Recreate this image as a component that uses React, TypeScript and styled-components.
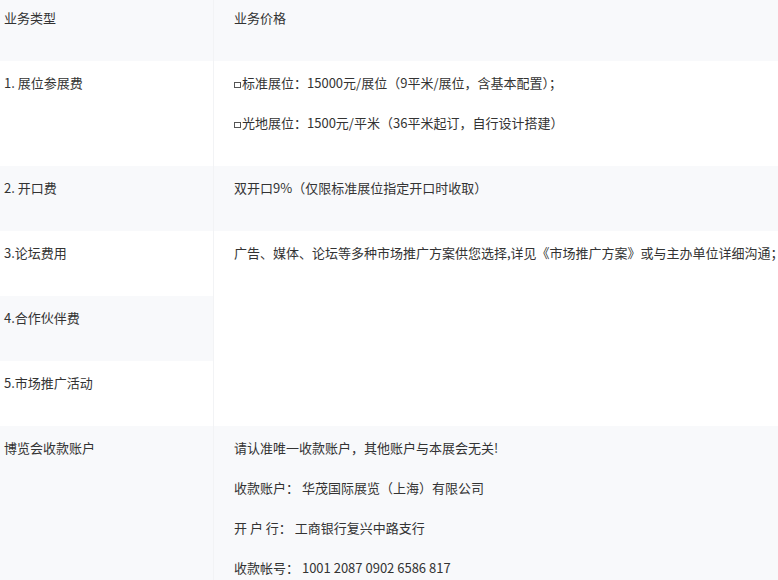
import React from "react";
import styled, { createGlobalStyle } from "styled-components";

const Global = createGlobalStyle`
  html, body { margin: 0; padding: 0; background: #ffffff; }
  body {
    overflow: hidden;
    font-family: "Noto Sans CJK SC", "Noto Sans", sans-serif;
    font-size: 13px;
    color: #333333;
  }
`;

const Viewport = styled.div`
  width: 778px;
  height: 580px;
  overflow: hidden;
`;

const Grid = styled.div`
  display: grid;
  grid-template-columns: 213px 700px;
  width: 913px;
`;

const Cell = styled.div<{ $shade?: boolean; $head?: boolean; $right?: boolean; $span?: number }>`
  background: ${(p) => (p.$shade ? "#f8f9fb" : "#ffffff")};
  padding: ${(p) => (p.$head ? "8px" : "12px")} 0 13px ${(p) => (p.$right ? "20px" : "4px")};
  border-left: ${(p) => (p.$right ? "1px solid #f2f3f5" : "none")};
  white-space: nowrap;
  ${(p) => (p.$span ? `grid-row: span ${p.$span};` : "")}
`;

const Line = styled.p`
  margin: 0 0 20px 0;
  line-height: 20px;
  height: 20px;
`;

const Box = styled.span`
  display: inline-block;
  width: 5px;
  height: 4px;
  border: 1px solid #555;
  margin-right: 1px;
  vertical-align: 0px;
`;

export default function App() {
  return (
    <Viewport>
      <Global />
      <Grid>
        <Cell $shade $head>
          <Line>业务类型</Line>
        </Cell>
        <Cell $shade $head $right>
          <Line>业务价格</Line>
        </Cell>

        <Cell>
          <Line>1. 展位参展费</Line>
        </Cell>
        <Cell $right>
          <Line>
            <Box />标准展位：15000元/展位（9平米/展位，含基本配置）；
          </Line>
          <Line>
            <Box />光地展位：1500元/平米（36平米起订，自行设计搭建）
          </Line>
        </Cell>

        <Cell $shade>
          <Line>2. 开口费</Line>
        </Cell>
        <Cell $shade $right>
          <Line>双开口9%（仅限标准展位指定开口时收取）</Line>
        </Cell>

        <Cell>
          <Line>3.论坛费用</Line>
        </Cell>
        <Cell $right $span={3}>
          <Line>广告、媒体、论坛等多种市场推广方案供您选择,详见《市场推广方案》或与主办单位详细沟通；</Line>
        </Cell>
        <Cell $shade>
          <Line>4.合作伙伴费</Line>
        </Cell>
        <Cell>
          <Line>5.市场推广活动</Line>
        </Cell>

        <Cell $shade>
          <Line>博览会收款账户</Line>
        </Cell>
        <Cell $shade $right>
          <Line>请认准唯一收款账户，其他账户与本展会无关!</Line>
          <Line>收款账户： 华茂国际展览（上海）有限公司</Line>
          <Line>开 户 行： 工商银行复兴中路支行</Line>
          <Line>收款帐号： 1001 2087 0902 6586 817</Line>
        </Cell>
      </Grid>
    </Viewport>
  );
}
